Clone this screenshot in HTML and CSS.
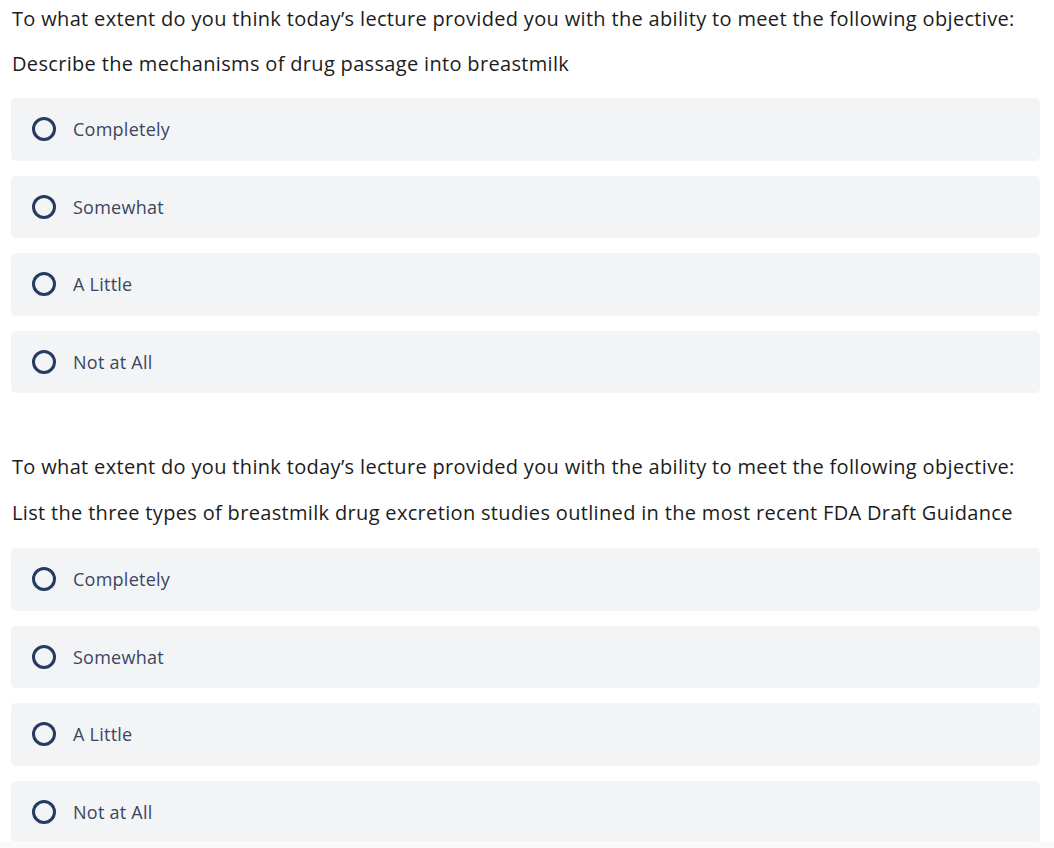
FILE: index.html
```html
<!DOCTYPE html>
<html lang="en">
<head>
  <meta charset="UTF-8">
  <title>Lecture Evaluation</title>
  <link rel="stylesheet" href="styles.css">
</head>
<body>

  <div class="encuesta">

    <div class="pregunta">
      <p class="enunciado">To what extent do you think today’s lecture provided you with the ability to meet the following objective:</p>
      <p class="objetivo">Describe the mechanisms of drug passage into breastmilk</p>

      <div class="opciones">
        <label class="opcion"><input type="radio" name="q1"><span class="circulo"></span>Completely</label>
        <label class="opcion"><input type="radio" name="q1"><span class="circulo"></span>Somewhat</label>
        <label class="opcion"><input type="radio" name="q1"><span class="circulo"></span>A Little</label>
        <label class="opcion"><input type="radio" name="q1"><span class="circulo"></span>Not at All</label>
      </div>
    </div>

    <div class="pregunta">
      <p class="enunciado">To what extent do you think today’s lecture provided you with the ability to meet the following objective:</p>
      <p class="objetivo">List the three types of breastmilk drug excretion studies outlined in the most recent FDA Draft Guidance</p>

      <div class="opciones">
        <label class="opcion"><input type="radio" name="q2"><span class="circulo"></span>Completely</label>
        <label class="opcion"><input type="radio" name="q2"><span class="circulo"></span>Somewhat</label>
        <label class="opcion"><input type="radio" name="q2"><span class="circulo"></span>A Little</label>
        <label class="opcion"><input type="radio" name="q2"><span class="circulo"></span>Not at All</label>
      </div>
    </div>

  </div>

  <div class="pie"></div>

</body>
</html>
```

FILE: styles.css
```css
body {
  margin: 0;
  font-family: "Open Sans", "Noto Sans", sans-serif;
  background-color: #fff;
}

.encuesta {
  padding: 5px 14px 0 11px;
}

.pregunta {
  margin-bottom: 60px;
}

.pregunta:last-child {
  margin-bottom: 0;
}

.enunciado, .objetivo {
  margin: 0 0 17px 1px;
  font-size: 20px;
  line-height: 28px;
  letter-spacing: 0.33px;
  color: #1c1c1c;
}

.objetivo {
  margin-bottom: 20px;
}

.pregunta + .pregunta .objetivo {
  margin-bottom: 21px;
}

.pregunta + .pregunta .enunciado {
  margin-bottom: 18px;
}

.opciones {
  display: flex;
  flex-direction: column;
  gap: 15px;
}

.opcion {
  display: flex;
  align-items: center;
  height: 62.5px;
  padding-left: 21px;
  background-color: #f3f4f6;
  border-radius: 5px;
  font-size: 18px;
  letter-spacing: 0.25px;
  color: #3a4660;
  cursor: pointer;
}

.opcion input {
  display: none;
}

.circulo {
  width: 18px;
  height: 18px;
  border: 3px solid #263a62;
  border-radius: 50%;
  margin-right: 17px;
}

.opcion input:checked + .circulo {
  background: radial-gradient(#263a62 45%, transparent 50%);
}

.pie {
  position: fixed;
  left: 0;
  right: 0;
  bottom: 0;
  height: 7px;
  background-color: #fafafa;
}
```
